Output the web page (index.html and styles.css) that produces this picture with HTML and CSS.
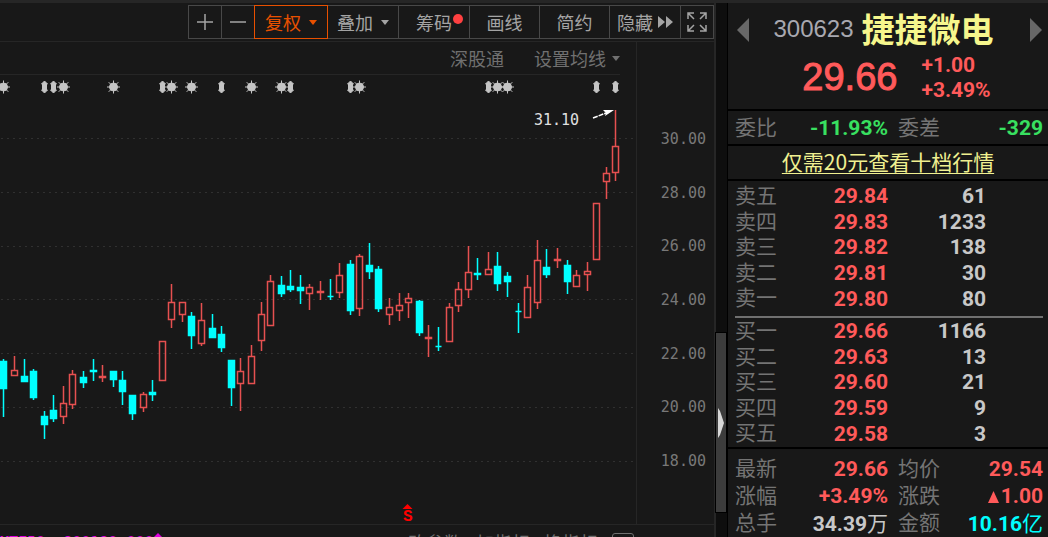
FILE: index.html
```html
<!DOCTYPE html>
<html lang="zh-CN">
<head>
<meta charset="utf-8">
<title>捷捷微电 300623</title>
<link rel="stylesheet" href="styles.css">
</head>
<body>
<div class="app">
  <main class="chart-pane">
    <div class="toolbar">
      <button class="tool tool-icon" aria-label="放大"><svg width="18" height="18" viewBox="0 0 18 18"><path d="M9 1v16M1 9h16"/></svg></button>
      <button class="tool tool-icon" aria-label="缩小"><svg width="18" height="18" viewBox="0 0 18 18"><path d="M1 9h16"/></svg></button>
      <button class="tool tool-active">复权<span class="caret"></span></button>
      <button class="tool">叠加<span class="caret"></span></button>
      <button class="tool">筹码<span class="dot"></span></button>
      <button class="tool tool-narrow">画线</button>
      <button class="tool tool-narrow">简约</button>
      <button class="tool tool-hide">隐藏<svg class="solid" width="15" height="12" viewBox="0 0 15 12"><path d="M0 0l7 6-7 6zM8 0l7 6-7 6z"/></svg></button>
      <button class="tool tool-icon" aria-label="全屏"><svg width="20" height="20" viewBox="0 0 20 20"><path d="M1 7V1h6M1 1l6 6M13 1h6v6M19 1l-6 6M1 13v6h6M1 19l6-6M19 13v6h-6M19 19l-6-6"/></svg></button>
    </div>
    <div class="board">
      <div class="plot">
        <div class="subhead">
          <button class="plain">深股通</button>
          <button class="plain">设置均线<span class="caret"></span></button>
        </div>
        <svg class="candles" id="candles" viewBox="0 75 636 449" preserveAspectRatio="xMinYMin meet" role="img" aria-label="K线图">
          <defs>
            <g id="star"><circle r="4"/><path d="M0-6.5V6.5M-6.5 0H6.5M-4.8-4.8L4.8 4.8M-4.8 4.8L4.8-4.8"/></g>
            <path id="updown" d="M0-6L3-3H2V3H3L0 6-3 3H-2V-3H-3z"/>
          </defs>
          <g id="grid" class="grid"></g>
          <g id="marks" class="marks"></g>
          <g id="bars"></g>
          <text class="peak" x="534" y="125">31.10</text>
          <path class="peak-line" d="M593 118L606 113"/>
          <path class="peak-head" d="M614 110L603 110 606 113 605 116z"/>
          <path class="signal" d="M407.500 504l5 5h-10z"/>
          <text class="signal" x="403" y="521">S</text>
        </svg>
      </div>
      <div class="axis">
        <span>30.00</span><span>28.00</span><span>26.00</span><span>24.00</span><span>22.00</span><span>20.00</span><span>18.00</span>
      </div>
    </div>
    <div class="indicator">
      <span class="indicator-value">MTF50: 800180.000<svg width="8" height="10" viewBox="0 0 8 10"><path d="M4 0l4 4H5v6H3V4H0z"/></svg></span>
      <span class="indicator-links"><button class="plain">改参数</button><button class="plain">加指标</button><button class="plain">换指标</button><span class="box"></span></span>
    </div>
  </main>

  <div class="gutter"><div class="thumb"><svg width="6" height="30" viewBox="0 0 6 30"><path d="M0 0l2 3 4 12-4 12-2 3z"/></svg></div></div>

  <aside class="quote">
    <header class="quote-head">
      <div class="title">
        <button class="nav" aria-label="上一只"><svg width="12" height="24" viewBox="0 0 12 24"><path d="M12 0v24L0 12z"/></svg></button>
        <h1><span class="code">300623</span><span class="name">捷捷微电</span></h1>
        <button class="nav" aria-label="下一只"><svg width="12" height="24" viewBox="0 0 12 24"><path d="M0 0v24l12-12z"/></svg></button>
      </div>
      <div class="price">
        <strong class="last">29.66</strong>
        <div class="change"><span>+1.00</span><span>+3.49%</span></div>
      </div>
    </header>
    <dl class="pairs ratio">
      <dt>委比</dt><dd class="down">-11.93%</dd><dt>委差</dt><dd class="down">-329</dd>
    </dl>
    <div class="promo"><a href="#">仅需20元查看十档行情</a></div>
    <div class="book">
      <table>
        <tr><th scope="row">卖五</th><td class="up">29.84</td><td>61</td><td></td></tr>
        <tr><th scope="row">卖四</th><td class="up">29.83</td><td>1233</td><td></td></tr>
        <tr><th scope="row">卖三</th><td class="up">29.82</td><td>138</td><td></td></tr>
        <tr><th scope="row">卖二</th><td class="up">29.81</td><td>30</td><td></td></tr>
        <tr><th scope="row">卖一</th><td class="up">29.80</td><td>80</td><td></td></tr>
      </table>
      <hr>
      <table>
        <tr><th scope="row">买一</th><td class="up">29.66</td><td>1166</td><td></td></tr>
        <tr><th scope="row">买二</th><td class="up">29.63</td><td>13</td><td></td></tr>
        <tr><th scope="row">买三</th><td class="up">29.60</td><td>21</td><td></td></tr>
        <tr><th scope="row">买四</th><td class="up">29.59</td><td>9</td><td></td></tr>
        <tr><th scope="row">买五</th><td class="up">29.58</td><td>3</td><td></td></tr>
      </table>
    </div>
    <dl class="pairs stats">
      <dt>最新</dt><dd class="up">29.66</dd><dt>均价</dt><dd class="up">29.54</dd>
      <dt>涨幅</dt><dd class="up">+3.49%</dd><dt>涨跌</dt><dd class="up"><svg class="rise" width="11" height="12" viewBox="0 0 11 12"><path d="M5.500 0L11 12H0z"/></svg>1.00</dd>
      <dt>总手</dt><dd>34.39<span class="unit">万</span></dd><dt>金额</dt><dd class="amount">10.16<span class="unit">亿</span></dd>
    </dl>
  </aside>
</div>
<script src="chart.js"></script>
</body>
</html>
```
FILE: styles.css
```css
* { box-sizing: border-box; }
body {
  margin: 0;
  background: #181818;
  color: #c8c8c8;
  font-family: "Liberation Sans", "Noto Sans CJK SC", sans-serif;
}
button {
  margin: 0;
  padding: 0;
  border: 0;
  background: none;
  color: inherit;
  font: inherit;
}
svg { display: block; flex: none; }

.app {
  display: grid;
  grid-template-columns: minmax(0, 1fr) 12px 320px;
  height: 100vh;
  border-top: 3px solid #262626;
  overflow: hidden;
}

/* chart side */
.chart-pane {
  display: flex;
  flex-direction: column;
  min-width: 0;
  overflow: hidden;
  border-right: 2px solid #262626;
}
.toolbar {
  display: flex;
  justify-content: flex-end;
  padding: 2px 0;
  border-bottom: 1px solid #262626;
}
.tool {
  position: relative;
  display: flex;
  align-items: center;
  justify-content: center;
  gap: 8px;
  width: 72px;
  height: 34px;
  margin-left: -1px;
  border: 1px solid #484848;
  color: #a4a4a4;
  font: 18px/32px "Noto Sans CJK SC", sans-serif;
}
.tool-narrow { width: 71px; }
.tool-icon { width: 34px; }
.tool-hide { gap: 5px; }
.tool-active {
  z-index: 1;
  width: 74px;
  border-color: #e85000;
  color: #e85000;
}
.tool svg { fill: none; stroke: #a4a4a4; stroke-width: 1.5; }
.tool .solid { fill: #a4a4a4; stroke: none; }
.caret {
  border: 4px solid transparent;
  border-top: 5px solid currentColor;
  border-bottom: 0;
}
.dot {
  position: absolute;
  top: 8px;
  right: 6px;
  width: 10px;
  height: 10px;
  border-radius: 50%;
  background: #ff4040;
}
.board {
  display: grid;
  grid-template-columns: minmax(0, 1fr) 78px;
  flex: none;
}
.subhead {
  display: flex;
  justify-content: flex-end;
  gap: 30px;
  height: 33px;
  margin-right: 16px;
  border-bottom: 1px solid #262626;
}
.plain {
  display: flex;
  align-items: center;
  gap: 6px;
  color: #707070;
  font: 18px/32px "Noto Sans CJK SC", sans-serif;
}
.candles { width: 100%; height: 449px; }
.grid { stroke: #303030; stroke-width: 1; stroke-dasharray: 2 4; }
.marks { fill: #c4c4c4; stroke: #c4c4c4; stroke-width: 1; }
.bar-up { fill: none; stroke: #e65050; stroke-width: 1.5; }
.bar-down { fill: #00ffff; stroke: #00ffff; stroke-width: 1.5; }
.peak { fill: #e0e0e0; font: 15px "DejaVu Sans Mono", monospace; }
.peak-line { stroke: #ffffff; stroke-width: 1.5; stroke-dasharray: 5 1; }
.peak-head { fill: #ffffff; }
.signal { fill: #ff0000; font: bold 16px "Liberation Mono", monospace; }
.axis {
  display: flex;
  flex-direction: column;
  justify-content: space-between;
  align-items: flex-end;
  padding: 87px 8px 53px 0;
  border-left: 1px solid #262626;
  color: #787878;
  font: 15px/20px "DejaVu Sans Mono", monospace;
}
.indicator {
  display: flex;
  flex: 1;
  justify-content: space-between;
  align-items: flex-start;
  min-height: 0;
  overflow: hidden;
  padding: 8px 80px 0 0;
  border-top: 1px solid #262626;
}
.indicator-value {
  display: flex;
  color: #e000e0;
  font: 15px/20px "DejaVu Sans Mono", monospace;
}
.indicator-value svg { fill: #e000e0; }
.indicator-links { display: flex; gap: 14px; }
.indicator-links .plain { line-height: 18px; }
.box {
  width: 22px;
  height: 18px;
  border: 1px solid #707070;
  border-radius: 3px;
}

/* scroll gutter */
.gutter {
  display: flex;
  flex-direction: column;
  padding: 330px 1px 25px 0;
  border-right: 1px solid #000000;
  background: #0e0e0e;
}
.thumb {
  display: flex;
  flex: 1;
  align-items: center;
  padding-left: 2px;
  background: #3c3c3c;
  outline: 1px solid #000000;
}
.thumb svg { fill: #d8d8d8; }

/* quote side */
.quote {
  display: flex;
  flex-direction: column;
  overflow: hidden;
}
.quote-head {
  height: 108px;
  padding: 6px 6px 0 9px;
  border-bottom: 2px solid #000000;
}
.title {
  display: flex;
  align-items: center;
  justify-content: space-between;
  height: 42px;
}
.nav svg { fill: #686868; }
h1 {
  display: flex;
  align-items: center;
  gap: 8px;
  margin: 0;
  padding: 0 12px 4px 0;
  font-weight: normal;
}
.code { padding-top: 2px; color: #a8a8b0; font-size: 24px; }
.name {
  color: #f6f68c;
  font: bold 33px/38px "Noto Sans CJK SC", sans-serif;
}
.price {
  display: flex;
  align-items: center;
  justify-content: center;
  gap: 24px;
  padding-left: 14px;
  color: #ff5a5a;
}
.last {
  font-size: 38px;
  font-weight: normal;
  line-height: 50px;
  -webkit-text-stroke: 1px #ff5a5a;
}
.change {
  display: flex;
  flex-direction: column;
  padding-top: 2px;
  font: bold 21px/25px Roboto, sans-serif;
}
.pairs {
  display: grid;
  grid-template-columns: 60px 93px 55px 1fr;
  flex: none;
  margin: 0;
  padding: 0 5px 0 7px;
}
.pairs dt, .book th {
  color: #747474;
  font: 21px/23px "Noto Sans CJK SC", sans-serif;
  text-align: left;
}
.book th { vertical-align: top; }
.pairs dt { padding-bottom: 2px; }
.pairs dt:nth-of-type(even) { padding-left: 10px; }
.pairs dd, .book td {
  margin: 0;
  padding: 0;
  font: bold 21px/25px Roboto, "Noto Sans CJK SC", sans-serif;
  text-align: right;
  white-space: nowrap;
}
.book td, .pairs dd { padding-top: 1px; line-height: 24px; }
.up { color: #ff5a5a; }
.down { color: #38e060; }
.amount { color: #00ffff; }
.unit { font: 21px/24px "Noto Sans CJK SC", sans-serif; }
.rise { display: inline-block; margin-right: 2px; fill: #ff5a5a; }
.ratio {
  align-items: center;
  height: 35px;
  border-bottom: 2px solid #000000;
}
.promo {
  height: 35px;
  border-bottom: 2px solid #000000;
  text-align: center;
}
.promo a {
  color: #f0f090;
  font: 21px/31px "Noto Sans CJK SC", sans-serif;
  text-underline-offset: 3px;
  text-decoration-thickness: 1px;
}
.book {
  padding: 2px 5px 1px 7px;
  border-bottom: 2px solid #000000;
}
.book table {
  width: 100%;
  height: 128px;
  table-layout: fixed;
  border-collapse: collapse;
}
.book th { width: 60px; padding: 0; }
.book td:nth-child(2) { width: 93px; }
.book td:nth-child(3) { width: 98px; }
.book hr {
  height: 2px;
  margin: 5px 0 0;
  border: 0;
  background: #707070;
}
.stats {
  grid-auto-rows: 27px;
  align-items: center;
  padding-top: 6px;
}
```
FILE: chart.js
```js
// One row per bar: x, high, body top, body bottom, low, direction (1 rises, 0 falls)
const bars = [
  [3,359,361,388,416,0],[14,356,370,375,375,1],[24,359,376,381,381,0],[33,369,371,397,399,0],
  [44,411,416,424,438,0],[53,395,410,418,421,0],[63,386,403,416,423,1],[72,370,374,404,408,1],
  [83,371,377,382,387,0],[93,359,370,371,380,0],[102,365,376,377,381,1],[113,371,371,379,386,0],
  [122,371,380,391,404,0],[132,395,395,413,419,0],[143,392,394,407,411,1],[152,380,392,394,400,0],
  [162,341,341,380,380,1],[171,284,302,319,327,1],[182,302,302,314,321,1],[191,312,316,335,348,0],
  [201,303,320,343,345,1],[212,314,328,337,337,0],[221,326,334,347,351,0],[231,360,360,387,405,0],
  [240,358,371,383,410,1],[251,345,356,383,383,1],[261,302,314,340,350,1],[270,275,281,325,325,1],
  [281,276,285,293,296,0],[290,270,286,289,291,0],[300,275,287,290,303,0],[309,284,287,293,309,1],
  [320,281,291,292,299,1],[330,279,296,296,299,0],[339,263,275,292,297,1],[350,260,264,310,314,0],
  [359,254,256,308,315,1],[369,243,265,271,278,0],[378,266,269,308,311,0],[389,298,307,314,324,1],
  [399,293,305,310,320,1],[408,293,298,302,317,1],[419,300,301,332,335,0],[428,325,337,338,356,1],
  [438,327,346,346,350,0],[449,303,307,341,341,1],[458,282,289,305,311,1],[468,246,272,289,297,1],
  [477,258,273,274,279,0],[488,252,269,274,274,1],[497,252,266,283,290,0],[507,272,276,281,296,0],
  [518,303,311,311,332,0],[527,275,287,317,317,1],[537,240,260,302,308,1],[546,249,267,274,277,0],
  [557,248,259,260,267,1],[567,260,265,281,293,0],[576,270,275,286,286,1],[587,262,271,274,290,1],
  [596,203,203,259,259,1],[606,167,173,181,198,1],[615,110,146,172,180,1]
];
const stars = [3, 63, 113, 171, 191, 251, 281, 359, 497, 507];
const arrows = [44, 53, 162, 221, 290, 350, 488, 596, 615];
const levels = [138, 192, 246, 299, 353, 407, 461];

function add(parent, name, attributes) {
  const node = document.createElementNS("http://www.w3.org/2000/svg", name);
  for (const key in attributes) node.setAttribute(key, attributes[key]);
  document.getElementById(parent).appendChild(node);
}

levels.forEach(y => add("grid", "path", { d: `M1 ${y + 0.5}H636` }));
stars.forEach(x => add("marks", "use", { href: "#star", x: x + 0.5, y: 87 }));
arrows.forEach(x => add("marks", "use", { href: "#updown", x: x + 0.5, y: 87 }));
bars.forEach(([x, high, top, bottom, low, rises]) => {
  const c = x + 0.5;
  const t = top + 0.5;
  const b = bottom + 0.5;
  add("bars", "path", {
    class: rises ? "bar-up" : "bar-down",
    d: `M${c} ${high}V${t}M${c} ${b}V${low + 1}M${c - 3} ${t}H${c + 3}V${b}H${c - 3}z`
  });
});
```
